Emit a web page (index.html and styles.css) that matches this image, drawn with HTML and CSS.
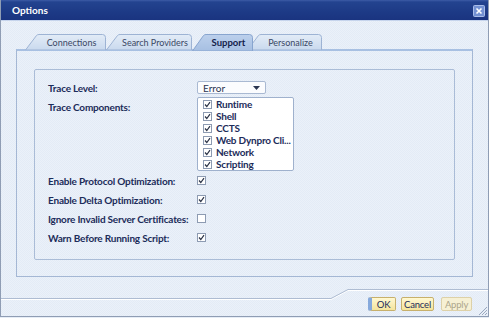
FILE: index.html
```html
<!DOCTYPE html>
<html>
<head>
<meta charset="utf-8">
<link rel="stylesheet" href="styles.css">
</head>
<body>
<div class="window">
  <div class="titlebar">
    <span class="title">Options</span>
    <span class="close"><svg width="12" height="12" viewBox="0 0 12 12"><rect x="0.5" y="0.5" width="11" height="11" rx="1" fill="#7391d2" stroke="#a9bde9"/><path d="M3.5 3.5 L8.5 8.5 M8.5 3.5 L3.5 8.5" stroke="#fff" stroke-width="1.6"/></svg></span>
  </div>
  <div class="content">
    <div class="tabs">
      <div class="tab tab-conn">
        <svg class="tab-bg" width="81" height="16" viewBox="0 0 81 16"><defs><linearGradient id="gi" x1="0" y1="0" x2="0" y2="1"><stop offset="0" stop-color="#e3ecf7"/><stop offset="1" stop-color="#c9d9ee"/></linearGradient></defs><path d="M0.5 16 L11.5 1.5 Q12.5 0.5 14 0.5 L77.5 0.5 Q80.5 0.5 80.5 3.5 L80.5 16 Z" fill="url(#gi)" stroke="#9db3d4"/></svg>
        <span class="tab-label">Connections</span>
      </div>
      <div class="tab tab-search">
        <svg class="tab-bg" width="86" height="16" viewBox="0 0 86 16"><path d="M0.5 16 L11.5 1.5 Q12.5 0.5 14 0.5 L82.5 0.5 Q85.5 0.5 85.5 3.5 L85.5 16 Z" fill="url(#gi)" stroke="#9db3d4"/></svg>
        <span class="tab-label">Search Providers</span>
      </div>
      <div class="tab tab-support">
        <svg class="tab-bg" width="61" height="17" viewBox="0 0 61 17"><defs><linearGradient id="ga" x1="0" y1="0" x2="0" y2="1"><stop offset="0" stop-color="#bcd0ec"/><stop offset="1" stop-color="#a6bfe2"/></linearGradient></defs><path d="M0.5 17 L11.5 1.5 Q12.5 0.5 14 0.5 L57.5 0.5 Q60.5 0.5 60.5 3.5 L60.5 17 Z" fill="url(#ga)" stroke="#88a5cf"/></svg>
        <span class="tab-label">Support</span>
      </div>
      <div class="tab tab-pers">
        <svg class="tab-bg" width="75" height="16" viewBox="0 0 75 16"><path d="M0.5 16 L11.5 1.5 Q12.5 0.5 14 0.5 L71.5 0.5 Q74.5 0.5 74.5 3.5 L74.5 16 Z" fill="url(#gi)" stroke="#9db3d4"/></svg>
        <span class="tab-label">Personalize</span>
      </div>
    </div>
    <div class="panel">
      <div class="group">
        <div class="form">
          <div class="label">Trace Level:</div>
          <div class="ctl">
            <div class="select"><span>Error</span><svg width="7" height="4" viewBox="0 0 7 4"><path d="M0 0 H7 L3.5 4 Z" fill="#2a3550"/></svg></div>
          </div>
          <div class="label label-top">Trace Components:</div>
          <div class="ctl">
            <div class="list">
              <div class="item"><svg class="cb" width="9" height="9" viewBox="0 0 9 9"><rect x="0.5" y="0.5" width="8" height="8" fill="#fff" stroke="#8d9bb2"/><path d="M2 4.5 L3.8 6.5 L7 2.2" fill="none" stroke="#2c3447" stroke-width="1.2"/></svg><span>Runtime</span></div>
              <div class="item"><svg class="cb" width="9" height="9" viewBox="0 0 9 9"><rect x="0.5" y="0.5" width="8" height="8" fill="#fff" stroke="#8d9bb2"/><path d="M2 4.5 L3.8 6.5 L7 2.2" fill="none" stroke="#2c3447" stroke-width="1.2"/></svg><span>Shell</span></div>
              <div class="item"><svg class="cb" width="9" height="9" viewBox="0 0 9 9"><rect x="0.5" y="0.5" width="8" height="8" fill="#fff" stroke="#8d9bb2"/><path d="M2 4.5 L3.8 6.5 L7 2.2" fill="none" stroke="#2c3447" stroke-width="1.2"/></svg><span>CCTS</span></div>
              <div class="item"><svg class="cb" width="9" height="9" viewBox="0 0 9 9"><rect x="0.5" y="0.5" width="8" height="8" fill="#fff" stroke="#8d9bb2"/><path d="M2 4.5 L3.8 6.5 L7 2.2" fill="none" stroke="#2c3447" stroke-width="1.2"/></svg><span>Web Dynpro Cli...</span></div>
              <div class="item"><svg class="cb" width="9" height="9" viewBox="0 0 9 9"><rect x="0.5" y="0.5" width="8" height="8" fill="#fff" stroke="#8d9bb2"/><path d="M2 4.5 L3.8 6.5 L7 2.2" fill="none" stroke="#2c3447" stroke-width="1.2"/></svg><span>Network</span></div>
              <div class="item"><svg class="cb" width="9" height="9" viewBox="0 0 9 9"><rect x="0.5" y="0.5" width="8" height="8" fill="#fff" stroke="#8d9bb2"/><path d="M2 4.5 L3.8 6.5 L7 2.2" fill="none" stroke="#2c3447" stroke-width="1.2"/></svg><span>Scripting</span></div>
            </div>
          </div>
          <div class="label row">Enable Protocol Optimization:</div>
          <div class="ctl row"><svg class="cb" width="9" height="9" viewBox="0 0 9 9"><rect x="0.5" y="0.5" width="8" height="8" fill="#fff" stroke="#8d9bb2"/><path d="M2 4.5 L3.8 6.5 L7 2.2" fill="none" stroke="#2c3447" stroke-width="1.2"/></svg></div>
          <div class="label row">Enable Delta Optimization:</div>
          <div class="ctl row"><svg class="cb" width="9" height="9" viewBox="0 0 9 9"><rect x="0.5" y="0.5" width="8" height="8" fill="#fff" stroke="#8d9bb2"/><path d="M2 4.5 L3.8 6.5 L7 2.2" fill="none" stroke="#2c3447" stroke-width="1.2"/></svg></div>
          <div class="label row">Ignore Invalid Server Certificates:</div>
          <div class="ctl row"><svg class="cb" width="9" height="9" viewBox="0 0 9 9"><rect x="0.5" y="0.5" width="8" height="8" fill="#fff" stroke="#8d9bb2"/></svg></div>
          <div class="label row">Warn Before Running Script:</div>
          <div class="ctl row"><svg class="cb" width="9" height="9" viewBox="0 0 9 9"><rect x="0.5" y="0.5" width="8" height="8" fill="#fff" stroke="#8d9bb2"/><path d="M2 4.5 L3.8 6.5 L7 2.2" fill="none" stroke="#2c3447" stroke-width="1.2"/></svg></div>
        </div>
      </div>
    </div>
  </div>
  <div class="footer">
    <svg class="sep" width="487" height="12" viewBox="0 0 487 12"><path d="M0 11.5 H330 L347 2.5 H487" fill="none" stroke="#ffffff"/><path d="M0 10.5 H330 L347 1.5 H487" fill="none" stroke="#aebcd2"/></svg>
    <div class="buttons">
      <div class="btn btn-ok">OK</div>
      <div class="btn btn-cancel">Cancel</div>
      <div class="btn btn-disabled">Apply</div>
    </div>
    <svg class="grip" width="10" height="10" viewBox="0 0 10 10"><path d="M9 1 L1 9 M9 4 L4 9 M9 7 L7 9" stroke="#9aa8bf" stroke-width="1"/></svg>
  </div>
</div>
</body>
</html>
```
FILE: styles.css
```css
html, body {
  margin: 0;
  padding: 0;
}
body {
  width: 489px;
  height: 318px;
  overflow: hidden;
  background: #e6edf6;
  font-family: Lato, "Open Sans", "DejaVu Sans", sans-serif;
  font-size: 10px;
}
.window {
  width: 489px;
  height: 317px;
  box-sizing: border-box;
  border: 1px solid #8f9db4;
  border-top: none;
  background: repeating-conic-gradient(#e3ebf6 0 25%, #ebf1f9 0 50%) 0 0 / 2px 2px;
  display: flex;
  flex-direction: column;
  position: relative;
}
.titlebar {
  height: 20px;
  flex: none;
  display: flex;
  align-items: center;
  justify-content: space-between;
  padding: 0 3px 0 11px;
  background: linear-gradient(#3d5ca6 0, #23438f 2px, #1d3a86 60%, #1a3480 100%);
  border-bottom: 1px solid #c6d4ec;
}
.title {
  color: #ffffff;
  font-weight: bold;
  font-size: 10px;
}
.close {
  display: flex;
  margin-top: 2px;
}
.content {
  flex: none;
  padding: 13px 15px 0 15px;
}
.tabs {
  display: flex;
  height: 15px;
  margin-left: 9px;
  position: relative;
  z-index: 2;
}
.tab {
  position: relative;
  height: 15px;
  box-sizing: border-box;
  padding-left: 12px;
  display: flex;
  align-items: center;
  justify-content: center;
  color: #3b4865;
  font-size: 9px;
}
.tab-bg {
  position: absolute;
  left: 0;
  top: 0;
}
.tab-label {
  position: relative;
  padding-top: 2px;
}
.tab-conn { width: 81px; z-index: 3; }
.tab-search { width: 86px; z-index: 2; }
.tab-support { width: 61px; z-index: 5; color: #13214a; font-weight: bold; font-size: 9.5px; }
.tab-pers { width: 75px; margin-left: -6px; z-index: 1; }
.panel {
  height: 228px;
  box-sizing: border-box;
  border: 1px solid #a4b7d4;
  border-top: 2px solid #a8c0e2;
  padding: 18px 17px 16px 17px;
  display: flex;
  flex-direction: column;
}
.group {
  flex: 1;
  border: 1px solid #aabcd7;
  border-radius: 2px;
  padding: 11px 13px 0 13px;
}
.form {
  display: grid;
  grid-template-columns: 149px 1fr;
  align-items: center;
}
.label {
  color: #1c2c5a;
  font-weight: bold;
  line-height: 12px;
  letter-spacing: -0.2px;
}
.label-top {
  align-self: start;
  margin-top: 4px;
  padding-top: 3px;
}
.row {
  height: 19px;
  display: flex;
  align-items: center;
}
.ctl {
  display: flex;
  align-items: center;
}
.select {
  width: 69px;
  height: 13px;
  box-sizing: border-box;
  border: 1px solid #a9b9d2;
  border-radius: 2px;
  background: #fbfcfe;
  display: flex;
  align-items: center;
  justify-content: space-between;
  padding: 0 5px 0 5px;
  color: #2b3550;
}
.list {
  margin-top: 3px;
  width: 97px;
  box-sizing: border-box;
  border: 1px solid #9fb1cd;
  border-radius: 2px;
  background: #ffffff;
  padding-left: 5px;
}
.item {
  height: 12px;
  display: flex;
  align-items: center;
  gap: 4px;
  color: #1c2c5a;
  font-weight: bold;
  white-space: nowrap;
  letter-spacing: -0.2px;
}
.cb {
  display: block;
  flex: none;
}
.footer {
  flex: 1;
  padding-top: 11px;
  position: relative;
}
.sep {
  display: block;
}
.buttons {
  display: flex;
  justify-content: flex-end;
  margin-top: -3px;
  padding-right: 16px;
}
.btn {
  height: 14px;
  box-sizing: border-box;
  border: 1px solid #c7b06c;
  border-radius: 2px;
  background: linear-gradient(#fff8d2, #f4e49c);
  color: #1c2c5a;
  display: flex;
  align-items: center;
  justify-content: center;
  padding: 0;
  margin-left: 5px;
  letter-spacing: -0.2px;
  font-size: 9.5px;
}
.btn-ok {
  width: 28px;
  border-left: 4px solid #86a9dc;
}
.btn-cancel {
  width: 33px;
}
.btn-disabled {
  width: 31px;
  margin-left: 7px;
  background: #f6f0d4;
  border-color: #ddd1a8;
  color: #aca58a;
}
.grip {
  position: absolute;
  right: 0;
  bottom: 0;
}
```
